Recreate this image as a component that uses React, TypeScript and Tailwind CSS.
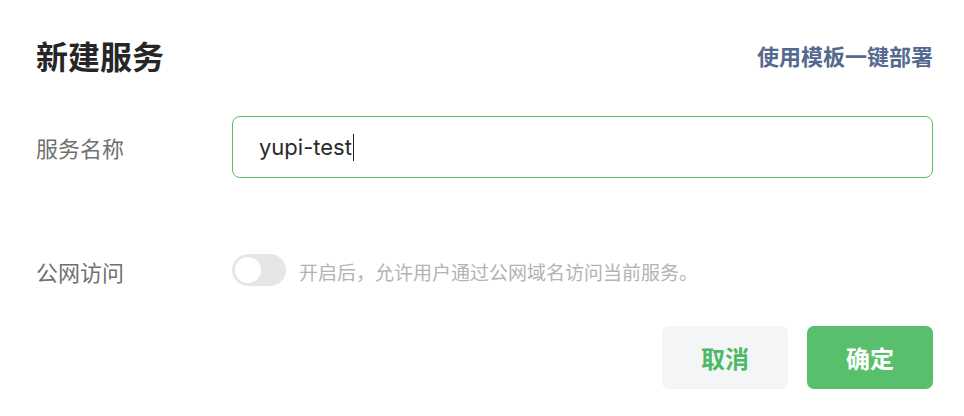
import React from "react";

const cjk = { fontFamily: '"Noto Sans CJK SC", "Noto Sans", sans-serif' };
const latin = { fontFamily: 'Inter, "Noto Sans CJK SC", sans-serif' };

export default function App() {
  return (
    <div className="w-[964px] h-[416px] bg-white pl-[36px] pr-[31px] pt-[29px] flex flex-col" style={cjk}>
      <div className="h-[52px] flex items-center justify-between">
        <h1 className="text-[32px] font-bold text-[#262626] leading-none">新建服务</h1>
        <a className="text-[22px] font-bold text-[#55698f] leading-none cursor-pointer">使用模板一键部署</a>
      </div>

      <div className="mt-[35px] h-[62px] flex items-center">
        <label className="w-[196px] shrink-0 text-[22px] text-[#707070] leading-none">服务名称</label>
        <div className="flex-1 h-full rounded-[8px] border border-[#4fc167] flex items-center pl-[26px]">
          <span className="text-[22px] text-[#2a2a2a] leading-none" style={latin}>yupi-test</span>
          <span className="w-px h-[27px] bg-[#222] ml-px" />
        </div>
      </div>

      <div className="mt-[76px] h-[32px] flex items-center">
        <label className="w-[196px] shrink-0 text-[22px] text-[#707070] leading-none mt-[2px]">公网访问</label>
        <div className="w-[54px] h-[32px] rounded-full bg-[#e6e6e6] flex items-center px-[3px] shrink-0">
          <div className="w-[26px] h-[26px] rounded-full bg-white" />
        </div>
        <span className="ml-[13px] text-[19px] text-[#b3b3b3] leading-none mt-[2px]">开启后，允许用户通过公网域名访问当前服务。</span>
      </div>

      <div className="mt-[40px] flex justify-end gap-[19px]">
        <button className="w-[126px] h-[63px] rounded-[7px] bg-[#f4f5f7] text-[#4dba63] text-[24px] font-bold">取消</button>
        <button className="w-[126px] h-[63px] rounded-[7px] bg-[#58bf6d] text-white text-[24px] font-bold">确定</button>
      </div>
    </div>
  );
}
